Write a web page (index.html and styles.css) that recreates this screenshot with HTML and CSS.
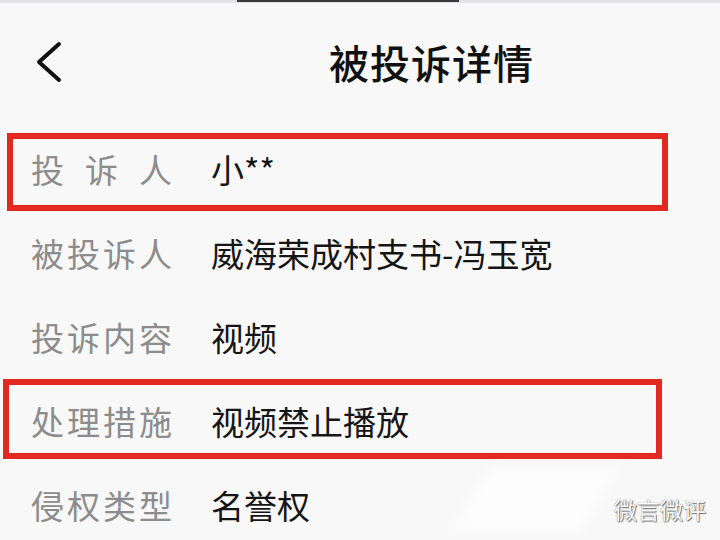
FILE: index.html
```html
<!DOCTYPE html>
<html lang="zh-CN">
<head>
<meta charset="utf-8">
<title>被投诉详情</title>
<link rel="stylesheet" href="styles.css">
</head>
<body>
<div class="page">
  <div class="strip"><div class="strip-bar"></div></div>
  <header class="header">
    <svg class="back" width="28" height="44" viewBox="0 0 28 44"><path d="M25 4 L5 22 L25 40" fill="none" stroke="#111" stroke-width="4" stroke-linecap="round" stroke-linejoin="round"/></svg>
    <h1 class="title">被投诉详情</h1>
  </header>
  <div class="list">
    <div class="row row-mark-a">
      <div class="label label-spread"><span>投</span><span>诉</span><span>人</span></div>
      <div class="value">小**</div>
    </div>
    <div class="row">
      <div class="label">被投诉人</div>
      <div class="value">威海荣成村支书-冯玉宽</div>
    </div>
    <div class="row">
      <div class="label">投诉内容</div>
      <div class="value">视频</div>
    </div>
    <div class="row row-mark-b">
      <div class="label">处理措施</div>
      <div class="value">视频禁止播放</div>
    </div>
    <div class="row">
      <div class="label">侵权类型</div>
      <div class="value">名誉权</div>
    </div>
  </div>
  <div class="smear"></div>
  <div class="watermark">微言微评</div>
</div>
</body>
</html>
```
FILE: styles.css
```css
html, body {
  margin: 0;
  padding: 0;
  background: #f8f8f8;
}
.page {
  position: relative;
  width: 720px;
  height: 540px;
  overflow: hidden;
  font-family: "Noto Sans CJK SC", "Noto Sans", sans-serif;
  background: #f8f8f8;
}
.strip {
  height: 3px;
  background: #e2e2e6;
  display: flex;
}
.strip-bar {
  margin-left: 237px;
  width: 222px;
  height: 2px;
  background: #3a3a3a;
}
.header {
  height: 124px;
  display: flex;
  align-items: center;
  padding-left: 34px;
  box-sizing: border-box;
  padding-bottom: 6px;
}
.back {
  display: block;
  flex: none;
}
.title {
  margin: 0 0 0 267px;
  font-size: 40px;
  font-weight: 500;
  color: #111;
  letter-spacing: 1px;
  line-height: 1;
}
.list {
  display: flex;
  flex-direction: column;
}
.row {
  position: relative;
  height: 84px;
  display: flex;
  align-items: center;
  padding-left: 31px;
  font-size: 33px;
  line-height: 1;
}
.label {
  width: 180px;
  flex: none;
  color: #8c8c8c;
  letter-spacing: 3px;
  white-space: nowrap;
}
.label-spread {
  display: flex;
  justify-content: space-between;
  width: 141px;
  margin-right: 39px;
  letter-spacing: 0;
}
.value {
  color: #151515;
  white-space: nowrap;
}
.row-mark-a::after,
.row-mark-b::after {
  content: "";
  position: absolute;
  border: 6px solid #e1291f;
  box-sizing: border-box;
}
.row-mark-a::after {
  top: 6px;
  left: 7px;
  width: 661px;
  height: 78px;
}
.row-mark-b::after {
  top: 0;
  left: 3px;
  width: 659px;
  height: 80px;
}
.smear {
  position: absolute;
  left: 470px;
  top: 470px;
  width: 130px;
  height: 60px;
  background: rgba(255, 255, 255, 0.7);
  filter: blur(6px);
  transform: skewX(-30deg);
}
.watermark {
  position: absolute;
  left: 614px;
  top: 498px;
  font-size: 23px;
  line-height: 1;
  color: #fff;
  letter-spacing: 0;
  text-shadow: 0 0 1px #555, 1px 1px 1px #777;
}
```
